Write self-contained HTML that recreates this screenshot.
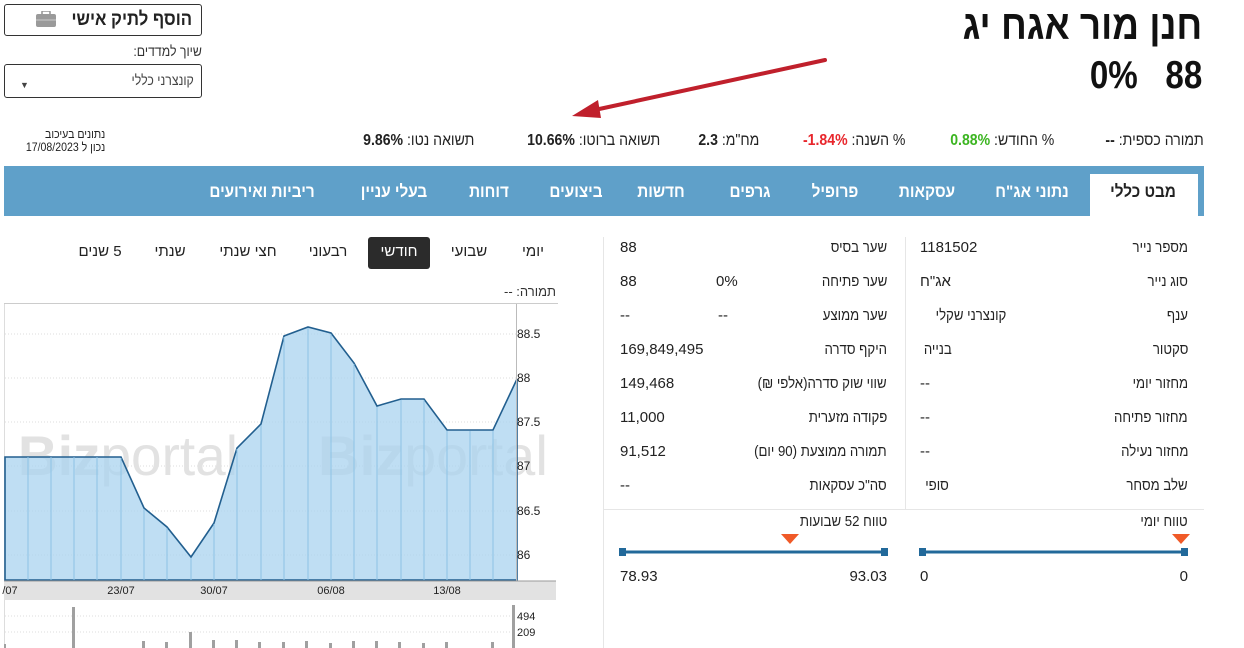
<!DOCTYPE html>
<html><head><meta charset="utf-8"><style>
*{margin:0;padding:0;box-sizing:border-box}
body{width:1244px;height:648px;overflow:hidden;background:#fff;font-family:"Liberation Sans","Noto Sans CJK SC",sans-serif;color:#222;position:relative}
.a{position:absolute;white-space:nowrap;direction:rtl}
.c{display:inline-block;transform:scaleX(.88);transform-origin:right center}
.nav{position:absolute;left:4px;top:166px;width:1200px;height:50px;background:#5fa0c9}
.nav span{position:absolute;top:16px;color:#fff;font-weight:bold;font-size:17px;transform:translateX(-50%) scaleX(.9);white-space:nowrap;direction:rtl}
.tb{font-size:15px;color:#222}
bdi{unicode-bidi:isolate;direction:ltr}
</style></head><body>

<div class="a" style="right:42px;top:2px;font-size:41px;font-weight:bold;color:#111"><span class="c" style="transform:scaleX(.9)">חנן מור אגח יג</span></div>
<div class="a" style="right:42px;top:54px;font-size:39px;font-weight:bold;color:#111;direction:ltr"><span class="c" style="transform:scaleX(.85);transform-origin:right">0%&nbsp;&nbsp;&nbsp;88</span></div>

<svg class="a" style="left:0;top:0" width="1244" height="160">
<line x1="825" y1="60" x2="590" y2="111" stroke="#c0202c" stroke-width="4" stroke-linecap="round"/>
<polygon points="572,116 598,100 601,118" fill="#c0202c"/>
</svg>

<div class="a" style="right:40px;top:132px;font-size:16px"><span class="c">תמורה כספית: <b>--</b></span></div>
<div class="a" style="right:190px;top:132px;font-size:16px"><span class="c">% החודש: <b style="color:#3cb521"><bdi>0.88%</bdi></b></span></div>
<div class="a" style="right:339px;top:132px;font-size:16px"><span class="c">% השנה: <b style="color:#e8262c"><bdi>-1.84%</bdi></b></span></div>
<div class="a" style="right:485px;top:132px;font-size:16px"><span class="c">מח"מ: <b><bdi>2.3</bdi></b></span></div>
<div class="a" style="right:584px;top:132px;font-size:16px"><span class="c">תשואה ברוטו: <b><bdi>10.66%</bdi></b></span></div>
<div class="a" style="right:770px;top:132px;font-size:16px"><span class="c">תשואה נטו: <b><bdi>9.86%</bdi></b></span></div>
<div class="a" style="right:1139px;top:128px;font-size:12px;line-height:13px;text-align:right"><span class="c">נתונים בעיכוב<br>נכון ל <bdi>17/08/2023</bdi></span></div>

<div style="position:absolute;left:4px;top:4px;width:198px;height:32px;border:1px solid #333;border-radius:3px"></div>
<div class="a" style="right:1052px;top:9px;font-size:19px;font-weight:bold"><span class="c">הוסף לתיק אישי</span></div>
<svg class="a" style="left:36px;top:11px" width="20" height="16"><rect x="6" y="0" width="8" height="4" rx="1" fill="none" stroke="#999" stroke-width="1.6"/><rect x="0" y="3" width="20" height="13" rx="2" fill="#9a9a9a"/><line x1="0" y1="9" x2="20" y2="9" stroke="#ccc"/></svg>
<div class="a" style="right:1042px;top:43px;font-size:14px;color:#333"><span class="c">שיוך למדדים:</span></div>
<div style="position:absolute;left:4px;top:64px;width:198px;height:34px;border:1px solid #333;border-radius:3px"></div>
<div class="a" style="right:1050px;top:72px;font-size:14px;color:#444"><span class="c">קונצרני כללי</span></div>
<div class="a" style="left:20px;top:80px;font-size:9px;color:#444">▼</div>

<div class="nav">
<div style="position:absolute;left:1086px;top:8px;width:108px;height:42px;background:#fff"></div>
<span style="left:1139px;color:#222">מבט כללי</span>
<span style="left:1028px">נתוני אג"ח</span>
<span style="left:923px">עסקאות</span>
<span style="left:831px">פרופיל</span>
<span style="left:746px">גרפים</span>
<span style="left:657px">חדשות</span>
<span style="left:572px">ביצועים</span>
<span style="left:485px">דוחות</span>
<span style="left:390px">בעלי עניין</span>
<span style="left:258px">ריביות ואירועים</span>
</div>

<div style="position:absolute;left:603px;top:237px;width:1px;height:411px;background:#e6e6e6"></div>
<div style="position:absolute;left:905px;top:237px;width:1px;height:272px;background:#e6e6e6"></div>
<div style="position:absolute;left:604px;top:509px;width:600px;height:1px;background:#e6e6e6"></div>
<div class="tb">
<div class="a" style="right:56px;top:239px"><span class="c">מספר נייר</span></div><div class="a" style="left:920px;top:239px;direction:ltr">1181502</div>
<div class="a" style="right:56px;top:273px"><span class="c">סוג נייר</span></div><div class="a" style="left:920px;top:273px">אג"ח</div>
<div class="a" style="right:56px;top:307px"><span class="c">ענף</span></div><div class="a" style="right:238px;top:307px"><span class="c">קונצרני שקלי</span></div>
<div class="a" style="right:56px;top:341px"><span class="c">סקטור</span></div><div class="a" style="right:292px;top:341px"><span class="c">בנייה</span></div>
<div class="a" style="right:56px;top:375px"><span class="c">מחזור יומי</span></div><div class="a" style="left:920px;top:375px">--</div>
<div class="a" style="right:56px;top:409px"><span class="c">מחזור פתיחה</span></div><div class="a" style="left:920px;top:409px">--</div>
<div class="a" style="right:56px;top:443px"><span class="c">מחזור נעילה</span></div><div class="a" style="left:920px;top:443px">--</div>
<div class="a" style="right:56px;top:477px"><span class="c">שלב מסחר</span></div><div class="a" style="right:295px;top:477px"><span class="c">סופי</span></div>

<div class="a" style="right:357px;top:239px"><span class="c">שער בסיס</span></div><div class="a" style="left:620px;top:239px">88</div>
<div class="a" style="right:357px;top:273px"><span class="c">שער פתיחה</span></div><div class="a" style="left:620px;top:273px">88</div><div class="a" style="left:716px;top:273px;direction:ltr">0%</div>
<div class="a" style="right:357px;top:307px"><span class="c">שער ממוצע</span></div><div class="a" style="left:620px;top:307px">--</div><div class="a" style="left:718px;top:307px">--</div>
<div class="a" style="right:357px;top:341px"><span class="c">היקף סדרה</span></div><div class="a" style="left:620px;top:341px;direction:ltr">169,849,495</div>
<div class="a" style="right:357px;top:375px"><span class="c">שווי שוק סדרה(אלפי ₪)</span></div><div class="a" style="left:620px;top:375px;direction:ltr">149,468</div>
<div class="a" style="right:357px;top:409px"><span class="c">פקודה מזערית</span></div><div class="a" style="left:620px;top:409px;direction:ltr">11,000</div>
<div class="a" style="right:357px;top:443px"><span class="c">תמורה ממוצעת (90 יום)</span></div><div class="a" style="left:620px;top:443px;direction:ltr">91,512</div>
<div class="a" style="right:357px;top:477px"><span class="c">סה"כ עסקאות</span></div><div class="a" style="left:620px;top:477px">--</div>

<div class="a" style="right:56px;top:513px"><span class="c">טווח יומי</span></div>
<div class="a" style="right:357px;top:513px"><span class="c">טווח 52 שבועות</span></div>
<div class="a" style="left:620px;top:568px;direction:ltr">78.93</div>
<div class="a" style="right:357px;top:568px;direction:ltr">93.03</div>
<div class="a" style="left:920px;top:568px">0</div>
<div class="a" style="right:56px;top:568px">0</div>
</div>
<svg class="a" style="left:600px;top:530px" width="600" height="30">
<polygon points="181,4 199,4 190,14" fill="#f05a28"/>
<polygon points="572,4 590,4 581,14" fill="#f05a28"/>
<line x1="22" y1="22" x2="286" y2="22" stroke="#22699a" stroke-width="3"/>
<rect x="19" y="18" width="7" height="8" fill="#22699a"/><rect x="281" y="18" width="7" height="8" fill="#22699a"/>
<line x1="322" y1="22" x2="586" y2="22" stroke="#22699a" stroke-width="3"/>
<rect x="319" y="18" width="7" height="8" fill="#22699a"/><rect x="581" y="18" width="7" height="8" fill="#22699a"/>
</svg>

<div style="position:absolute;left:368px;top:237px;width:62px;height:32px;background:#2b2b2b;border-radius:3px"></div>
<div class="a" style="left:0;top:243px;width:0;font-size:15px">
<span class="a" style="left:533px;transform:translateX(-50%)">יומי</span>
<span class="a" style="left:469px;transform:translateX(-50%)">שבועי</span>
<span class="a" style="left:399px;transform:translateX(-50%);color:#fff">חודשי</span>
<span class="a" style="left:328px;transform:translateX(-50%)">רבעוני</span>
<span class="a" style="left:248px;transform:translateX(-50%)">חצי שנתי</span>
<span class="a" style="left:170px;transform:translateX(-50%)">שנתי</span>
<span class="a" style="left:100px;transform:translateX(-50%)">5 שנים</span>
</div>
<div class="a" style="right:688px;top:284px;font-size:13px;color:#333">תמורה: --</div>

<svg class="a" style="left:0;top:300px;direction:ltr" width="560" height="348" font-family="Liberation Sans, sans-serif">
<line x1="4" y1="3.5" x2="558" y2="3.5" stroke="#ccc"/>
<line x1="4.5" y1="4" x2="4.5" y2="348" stroke="#ddd"/>
<g stroke="#ddd" stroke-dasharray="1,2">
<line x1="5" y1="34" x2="516" y2="34"/><line x1="5" y1="78" x2="516" y2="78"/><line x1="5" y1="122" x2="516" y2="122"/><line x1="5" y1="166" x2="516" y2="166"/><line x1="5" y1="211" x2="516" y2="211"/><line x1="5" y1="255" x2="516" y2="255"/>
</g>
<text x="18" y="175" font-size="56" font-weight="bold" fill="#e2e2e2" textLength="220" lengthAdjust="spacingAndGlyphs">Biz<tspan font-weight="normal">portal</tspan></text>
<text x="318" y="175" font-size="56" font-weight="bold" fill="#e2e2e2" textLength="230" lengthAdjust="spacingAndGlyphs">Biz<tspan font-weight="normal">portal</tspan></text>
<polygon fill="#a9d3ef" fill-opacity=".75" stroke="#225f8f" stroke-width="1.6" points="5,280 5,157 121,157 144,208 167,227 191,257 214,223 237,148 261,124 284,36 308,27 331,33 354,63 377,106 401,99 424,99 447,130 470,130 493,130 517,79 517,280"/>
<g stroke="#8cc3e6" stroke-width="1">
<line x1="28" y1="157" x2="28" y2="280"/><line x1="51" y1="157" x2="51" y2="280"/><line x1="74" y1="157" x2="74" y2="280"/><line x1="97" y1="157" x2="97" y2="280"/><line x1="121" y1="158" x2="121" y2="280"/><line x1="144" y1="209" x2="144" y2="280"/><line x1="167" y1="228" x2="167" y2="280"/><line x1="191" y1="258" x2="191" y2="280"/><line x1="214" y1="224" x2="214" y2="280"/><line x1="237" y1="149" x2="237" y2="280"/><line x1="261" y1="125" x2="261" y2="280"/><line x1="284" y1="37" x2="284" y2="280"/><line x1="308" y1="28" x2="308" y2="280"/><line x1="331" y1="34" x2="331" y2="280"/><line x1="354" y1="64" x2="354" y2="280"/><line x1="377" y1="107" x2="377" y2="280"/><line x1="401" y1="100" x2="401" y2="280"/><line x1="424" y1="100" x2="424" y2="280"/><line x1="447" y1="131" x2="447" y2="280"/><line x1="470" y1="131" x2="470" y2="280"/><line x1="493" y1="131" x2="493" y2="280"/>
</g>
<line x1="516.5" y1="4" x2="516.5" y2="281" stroke="#bbb"/>
<g font-size="12" fill="#222"><text x="517" y="38">88.5</text><text x="517" y="82">88</text><text x="517" y="126">87.5</text><text x="517" y="170">87</text><text x="517" y="215">86.5</text><text x="517" y="259">86</text></g>
<rect x="4" y="281" width="552" height="19" fill="#e2e2e2"/>
<line x1="4" y1="281" x2="556" y2="281" stroke="#999"/>
<g font-size="11" fill="#222" text-anchor="middle"><text x="10" y="294">/07</text><text x="121" y="294">23/07</text><text x="214" y="294">30/07</text><text x="331" y="294">06/08</text><text x="447" y="294">13/08</text></g>
<g stroke="#ddd" stroke-dasharray="1,2"><line x1="5" y1="316" x2="512" y2="316"/><line x1="5" y1="332" x2="512" y2="332"/></g>
<g fill="#a0a0a0">
<rect x="72" y="307" width="3" height="41"/><rect x="189" y="332" width="3" height="16"/><rect x="142" y="341" width="3" height="7"/><rect x="165" y="342" width="3" height="6"/><rect x="212" y="340" width="3" height="8"/><rect x="235" y="340" width="3" height="8"/><rect x="258" y="342" width="3" height="6"/><rect x="282" y="342" width="3" height="6"/><rect x="305" y="341" width="3" height="7"/><rect x="329" y="343" width="3" height="5"/><rect x="352" y="341" width="3" height="7"/><rect x="375" y="341" width="3" height="7"/><rect x="398" y="342" width="3" height="6"/><rect x="422" y="343" width="3" height="5"/><rect x="445" y="342" width="3" height="6"/><rect x="491" y="342" width="3" height="6"/><rect x="4" y="344" width="2" height="4"/><rect x="512" y="305" width="3" height="43"/>
</g>
<g font-size="11" fill="#222"><text x="517" y="320">494</text><text x="517" y="336">209</text></g>
</svg>
</body></html>
